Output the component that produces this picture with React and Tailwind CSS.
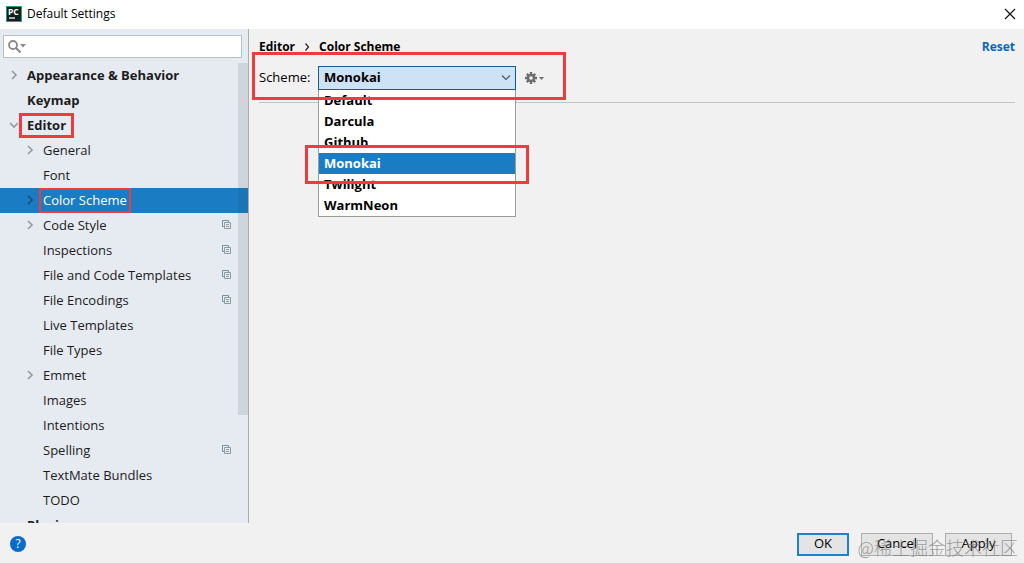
import React from 'react';

const items = [
  { label: 'Appearance & Behavior', level: 0, arrow: 'right' },
  { label: 'Keymap', level: 0 },
  { label: 'Editor', level: 0, arrow: 'down', marked: true },
  { label: 'General', level: 1, arrow: 'right' },
  { label: 'Font', level: 1 },
  { label: 'Color Scheme', level: 1, arrow: 'right', selected: true, marked: true },
  { label: 'Code Style', level: 1, arrow: 'right', project: true },
  { label: 'Inspections', level: 1, project: true },
  { label: 'File and Code Templates', level: 1, project: true },
  { label: 'File Encodings', level: 1, project: true },
  { label: 'Live Templates', level: 1 },
  { label: 'File Types', level: 1 },
  { label: 'Emmet', level: 1, arrow: 'right' },
  { label: 'Images', level: 1 },
  { label: 'Intentions', level: 1 },
  { label: 'Spelling', level: 1, project: true },
  { label: 'TextMate Bundles', level: 1 },
  { label: 'TODO', level: 1 },
  { label: 'Plugins', level: 0 },
];

const schemes = ['Default', 'Darcula', 'Github', 'Monokai', 'Twilight', 'WarmNeon'];

function AppLogo() {
  return (
    <svg width="16" height="16" viewBox="0 0 16 16" aria-hidden="true">
      <rect width="16" height="16" fill="#2a9c78" />
      <rect x="1" y="1" width="14" height="14" fill="#10201c" />
      <text x="2" y="8.6" fill="#fff" fontFamily="Open Sans, sans-serif" fontSize="8.5" fontWeight="700">PC</text>
      <rect x="3" y="11.4" width="6" height="1.3" fill="#fff" />
    </svg>
  );
}

function Chevron({ direction, selected }) {
  return (
    <svg width="10" height="10" viewBox="0 0 10 10" fill="none" stroke={selected ? '#16527f' : '#989ba0'} strokeWidth="1.7" aria-hidden="true">
      <path d={direction === 'down' ? 'M1 3L5 7L9 3' : 'M3 1L7 5L3 9'} />
    </svg>
  );
}

function ProjectIcon() {
  return (
    <svg width="9" height="9" viewBox="0 0 9 9" fill="none" aria-hidden="true">
      <path d="M2 6.5H.5V.5H6.5V2" stroke="#7393a3" />
      <path d="M2.5 2.5H8.5V8.5H2.5ZM4 4.5H7M4 6.5H7" stroke="#8e9aa2" />
    </svg>
  );
}

function Gear() {
  return (
    <svg width="20" height="12" viewBox="0 0 20 12" aria-hidden="true">
      <g stroke="#6e6e6e" strokeWidth="2.4">
        <path d="M6 0V12M0 6H12M1.8 1.8L10.2 10.2M10.2 1.8L1.8 10.2" />
      </g>
      <circle cx="6" cy="6" r="4.1" fill="#6e6e6e" />
      <circle cx="6" cy="6" r="1.8" fill="#f1f1f1" />
      <path d="M14 5H19L16.5 8Z" fill="#6e6e6e" />
    </svg>
  );
}

function TreeRow({ item }) {
  const indent = item.level === 0 ? 'pl-[9px] font-bold' : 'pl-[25px]';
  const colour = item.selected ? 'bg-[#1a7dc4] text-white' : 'text-[#1c1c1c]';
  return (
    <li>
      <a href="#" aria-current={item.selected ? 'page' : undefined} className={`flex h-[25px] items-center pr-[17px] pb-0.5 ${indent} ${colour}`}>
        <span className="flex w-[18px] shrink-0 items-center">
          {item.arrow && <Chevron direction={item.arrow} selected={item.selected} />}
        </span>
        <span className="relative whitespace-nowrap">
          {item.label}
          {item.marked && (
            <span className={item.selected ? 'absolute -inset-x-1 -top-0.5 -bottom-[3px] border-2 border-[#ee3b3d]' : 'absolute -inset-x-2 -top-0.5 -bottom-[3px] border-3 border-[#ee3b3d]'} />
          )}
        </span>
        {item.project && <span className="ml-auto"><ProjectIcon /></span>}
      </a>
    </li>
  );
}

function Sidebar() {
  return (
    <nav aria-label="Settings" className="relative flex w-[249px] shrink-0 flex-col border-r border-[#a9adb2] bg-[#e6eaf1]">
      <label className="mt-1.5 mr-1.5 ml-[3px] flex h-[23px] shrink-0 items-center border border-[#b9bec4] bg-white pl-1">
        <svg width="19" height="14" viewBox="0 0 19 14" fill="none" aria-hidden="true">
          <circle cx="5" cy="5" r="4" stroke="#8a8a8a" strokeWidth="1.8" />
          <path d="M8 8L12.5 12.5" stroke="#8a8a8a" strokeWidth="2.2" />
          <path d="M12 4H18L15 7.5Z" fill="#8a8a8a" />
        </svg>
        <input type="search" aria-label="Search settings" className="min-w-0 flex-1 bg-transparent outline-none" />
      </label>
      <div className="relative mt-[5px] min-h-0 flex-1 overflow-hidden">
        <ul>
          {items.map((item) => <TreeRow key={item.label} item={item} />)}
        </ul>
        <div className="absolute top-0 right-0 h-[352px] w-2.5 bg-[#20404a]/12" />
      </div>
    </nav>
  );
}

function SchemePicker() {
  return (
    <div className="relative mt-[9px] flex h-6 items-center">
      <label htmlFor="scheme" className="w-[59px] shrink-0 pb-0.5">Scheme:</label>
      <div className="relative h-6 w-[198px]">
        <select id="scheme" defaultValue="Monokai" className="h-full w-full appearance-none border border-[#10609f] bg-[#cde2f5] pb-0.5 pl-[5px] font-bold outline-none">
          {schemes.map((name) => <option key={name}>{name}</option>)}
        </select>
        <svg className="pointer-events-none absolute top-2 right-1" width="12" height="8" viewBox="0 0 12 8" fill="none" stroke="#42566a" strokeWidth="1.2" aria-hidden="true">
          <path d="M2 1.5L6 5.5L10 1.5" />
        </svg>
        <ul role="listbox" aria-label="Scheme" className="absolute top-full left-0 z-10 w-full border-x border-b border-[#9c9c9c] bg-white font-bold">
          {schemes.map((name) => (
            <li key={name} role="option" aria-selected={name === 'Monokai'} className={name === 'Monokai' ? 'relative flex h-[21px] items-center bg-[#1a7dc4] pb-0.5 pl-[5px] text-white' : 'flex h-[21px] items-center pb-0.5 pl-[5px]'}>
              {name}
              {name === 'Monokai' && <span className="absolute -inset-x-3.5 -top-2 -bottom-2.5 z-10 border-3 border-[#ee3b3d]" />}
            </li>
          ))}
        </ul>
      </div>
      <button type="button" aria-label="Scheme actions" className="ml-[9px]"><Gear /></button>
      <span className="pointer-events-none absolute -top-3.5 -left-[7px] z-20 h-12 w-[314px] border-3 border-[#ee3b3d]" />
    </div>
  );
}

export default function App() {
  return (
    <div className="flex h-screen flex-col overflow-hidden bg-[#f1f1f1] font-['Open_Sans','Noto_Sans_CJK_SC',sans-serif] text-[13px] leading-5 text-black">
      <header className="flex h-[29px] shrink-0 items-center bg-white pr-2 pb-0.5 pl-1.5">
        <AppLogo />
        <h1 className="ml-[5px] text-[12px]">Default Settings</h1>
        <button type="button" aria-label="Close" className="ml-auto">
          <svg width="12" height="12" viewBox="0 0 12 12" stroke="#111" strokeWidth="1.2" aria-hidden="true"><path d="M1 1L11 11M11 1L1 11" /></svg>
        </button>
      </header>
      <div className="flex min-h-0 flex-1">
        <Sidebar />
        <main className="min-w-0 flex-1 pt-2 pr-[9px] pl-2.5">
          <div className="flex items-center text-[12px] font-bold">
            <span>Editor</span>
            <svg className="mx-2" width="8" height="10" viewBox="0 0 8 10" fill="none" stroke="#222" strokeWidth="1.2" aria-hidden="true"><path d="M2.5 1.5L5.5 5L2.5 8.5" /></svg>
            <h2>Color Scheme</h2>
            <button type="button" className="ml-auto text-[#0b66b5]">Reset</button>
          </div>
          <SchemePicker />
          <hr className="mt-3 border-[#c4c4c4]" />
        </main>
      </div>
      <footer className="relative flex h-10 shrink-0 items-center gap-3 pt-0.5 pr-3 pl-2.5">
        <button type="button" aria-label="Help" className="mr-auto flex size-4 items-center justify-center rounded-full bg-[#0a6bc9] text-[12px] text-white">?</button>
        <button type="button" className="flex h-[23px] w-[52px] items-center justify-center border-2 border-[#1c83ca] bg-[#e4e4e4] pb-0.5">OK</button>
        <button type="button" className="flex h-[23px] w-[72px] items-center justify-center border border-[#adadad] bg-[#e4e4e4] pb-0.5">Cancel</button>
        <button type="button" className="flex h-[23px] w-[67px] items-center justify-center border border-[#adadad] bg-[#e4e4e4] pb-0.5">Apply</button>
        <span className="pointer-events-none absolute right-1.5 bottom-1 font-['Noto_Sans_CJK_SC',sans-serif] text-[18px] leading-6 font-light whitespace-nowrap text-[#777]/70">@稀土掘金技术社区</span>
      </footer>
    </div>
  );
}
